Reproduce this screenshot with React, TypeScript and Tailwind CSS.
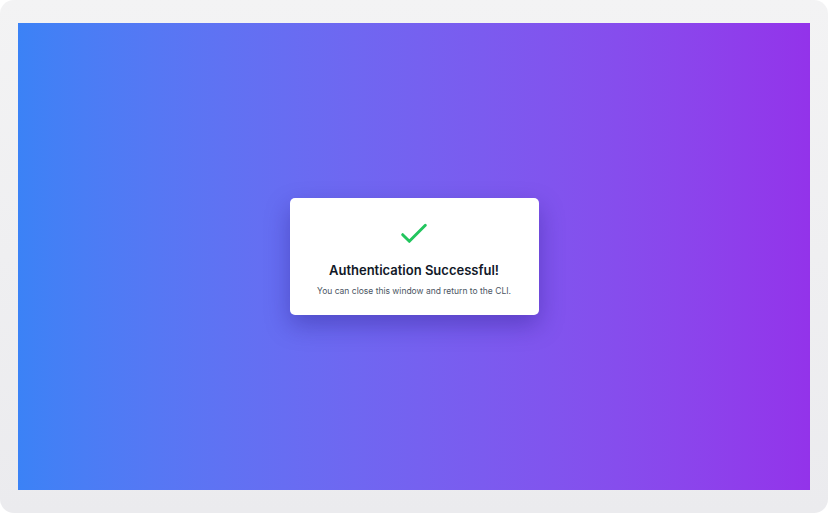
export default function App() {
  return (
    <div className="w-[828px] h-[513px] bg-white" style={{ fontFamily: 'Inter, "Noto Sans", sans-serif' }}>
      <div className="w-full h-full rounded-[14px] bg-gradient-to-b from-[#f3f3f4] to-[#ebebee] px-[18px] pt-[23px] pb-[23px]">
        <div className="w-full h-full bg-gradient-to-r from-[#3b82f6] to-[#9333ea] flex items-center justify-center">
          <div className="w-[249px] bg-white rounded-[5px] shadow-[0_10px_25px_rgba(30,20,120,0.35)] flex flex-col items-center pt-[20px] pb-[18px]">
            <svg className="w-[32px] h-[32px] text-[#22c55e]" fill="none" stroke="currentColor" viewBox="0 0 24 24">
              <path strokeLinecap="round" strokeLinejoin="round" strokeWidth={2.2} d="M3.5 12.5l5 5L20.5 5.5" />
            </svg>
            <h1 className="mt-[11px] text-[13px] leading-[18px] font-semibold text-[#111827]">Authentication Successful!</h1>
            <p className="mt-[6px] text-[8.5px] leading-[12px] text-[#4b5563]">You can close this window and return to the CLI.</p>
          </div>
        </div>
      </div>
    </div>
  );
}
